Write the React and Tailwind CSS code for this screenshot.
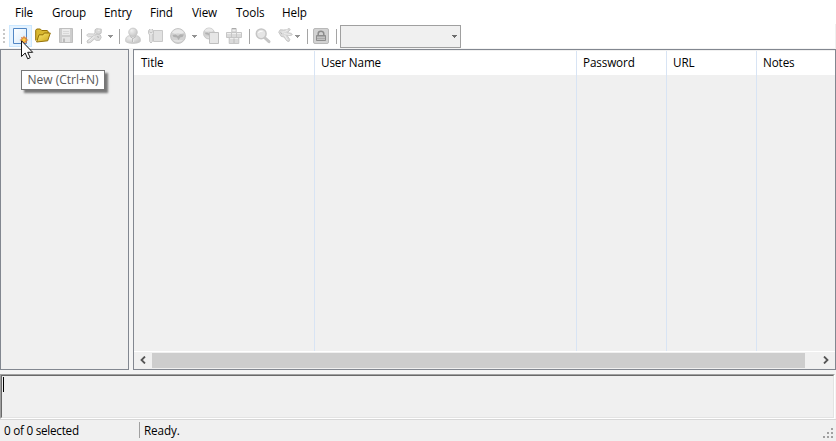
import React from "react";

const menus = [
  ["File", "w-[37px]"],
  ["Group", "w-[52px]"],
  ["Entry", "w-[46px]"],
  ["Find", "w-[42px]"],
  ["View", "w-[44px]"],
  ["Tools", "w-[46px]"],
  ["Help", "w-[44px]"],
];

const Icon = ({ children }) => (
  <svg width="18" height="18" viewBox="-1 -1 18 18" className="block shrink-0">{children}</svg>
);
const Item = ({ children }) => (
  <div className="flex h-[22px] w-[23px] shrink-0 items-center pl-[2px]">{children}</div>
);
const Split = ({ children, wide = true }) => (
  <div className={wide ? "flex h-[22px] w-8 shrink-0 items-center pl-px" : "flex h-[22px] w-[29px] shrink-0 items-center pl-[2px]"}>
    {children}
    <svg width="5" height="3" viewBox="0 0 5 3" shapeRendering="crispEdges" className={wide ? "ml-[5px] shrink-0" : "ml-0 shrink-0"}>
      <path d="M0 0h5v1H4v1H3v1H2V2H1V1H0z" fill="#929292" />
    </svg>
  </div>
);
const Sep = () => (
  <div className="flex w-[6px] shrink-0 pl-[3px]"><div className="h-[15px] w-px bg-[#a5a5a5]" /></div>
);

const NewIcon = () => (
  <Icon>
    <defs><linearGradient id="page" x2="1" y2="1"><stop stopColor="#fff" /><stop offset="1" stopColor="#d7eafa" /></linearGradient></defs>
    <path d="M1.5.5h13v15h-13z" fill="url(#page)" stroke="#5287c5" />
    <path d="M12 7.5l1 2 2-.5-.5 2 2 1-2 1 .5 2-2-.5-1 2-1-2-2 .5.5-2-2-1 2-1-.5-2 2 .5z" fill="#dc8541" />
    <circle cx="12" cy="12" r="1.7" fill="#ffd33c" />
  </Icon>
);
const FolderIcon = () => (
  <Icon>
    <defs><linearGradient id="gold" y2="1"><stop stopColor="#fbea70" /><stop offset="1" stopColor="#cda51c" /></linearGradient></defs>
    <path d="M.7 12.5V2.2L1.7 1h3.6l1.4 1.5h5.6l1 1.5v3" fill="#d9b830" stroke="#957107" />
    <path d="M1.6 14L4 6.8h4L9.3 5h6l-2.6 7.8z" fill="url(#gold)" stroke="#957107" strokeLinejoin="round" />
  </Icon>
);
const SaveIcon = () => (
  <Icon>
    <path d="M1.5.5h13v14h-13z" fill="#cdcdcd" stroke="#bfbfbf" />
    <path d="M4 1h8v6H4z" fill="#ebebeb" /><path d="M5 3.5h6M5 5.5h6" stroke="#d8d8d8" />
    <path d="M4 9h8v5H4z" fill="#e4e4e4" /><path d="M5 10.5h2V14H5z" fill="#bbb" />
  </Icon>
);
const KeyIcon = () => (
  <Icon>
    <path d="M9 1.8L10.5.7l4.8.5-.2 4-2.6 1-3.5-1z" fill="#dadada" stroke="#c2c2c2" />
    <path d="M.6 7.2l1.6-1.4 5.8.2 1.6-1.5 2 1.5-2.2 2.7-7 .1z" fill="#e2e2e2" stroke="#cdcdcd" />
    <path d="M1 13l7.3-5.6 2.6-1.3 3.4.8.9 2.6-1.6 2.8-3.3.1-2-1.4-3.8 3.5-2.9.5z" fill="#dcdcdc" stroke="#c6c6c6" />
    <path d="M2.8 13l5.7-4.9" stroke="#f1f1f1" /><path d="M11.2 8.5l1.8 1" stroke="#b5b5b5" strokeWidth="1.3" />
    <path d="M11.8 2.2h2" stroke="#f2f2f2" />
  </Icon>
);
const UserIcon = () => (
  <Icon>
    <defs><radialGradient id="silver" cx=".35" cy=".3" r=".8"><stop stopColor="#f0f0f0" /><stop offset="1" stopColor="#c2c2c2" /></radialGradient></defs>
    <path d="M.7 13.5C.2 9.5 2 7.8 5 7.6h6c3 .2 4.8 1.9 4.3 5.9C13 16 3 16 .7 13.5z" fill="url(#silver)" stroke="#c6c6c6" strokeWidth=".8" />
    <ellipse cx="8" cy="4.3" rx="4.3" ry="4.2" fill="url(#silver)" stroke="#c4c4c4" strokeWidth=".8" />
    <path d="M5 8.4l3 2.2 3-2.2M7.5 10.5v3.5" fill="none" stroke="#bcbcbc" />
    <path d="M8.5 11v3" stroke="#e8e8e8" />
  </Icon>
);
const EntryIcon = () => (
  <Icon>
    <path d="M5.5 2.5h9v11h-9z" fill="#e1e1e1" stroke="#c8c8c8" />
    <path d="M2 1v3.5h2V1l1.5 1.5v3L4.3 7v6.5L3 15l-1.3-1.5V7L.6 5.5v-3z" fill="#e5e5e5" stroke="#c4c4c4" />
  </Icon>
);
const Globe = () => (
  <>
    <circle cx="8" cy="8" r="7.4" fill="#d2d2d2" stroke="#c3c3c3" />
    <path d="M2 4.8C4-.1 12-.1 14 4.8l-3 1-3-.6-3 .6z" fill="#e9e9e9" />
    <path d="M2.5 7l3-.5L8 8l2.2-1.8L14 6.5 12.5 9l-2 .3L8.5 12 7 9.5 3.5 9z" fill="#b0b0b0" />
    <path d="M3 12c2 2.5 8 2.5 10 0l-4 .3z" fill="#e4e4e4" />
  </>
);
const CopyIcon = () => (
  <Icon>
    <g transform="translate(0 -.5) scale(.75)"><Globe /></g>
    <path d="M6.5 4.5h9v11h-9z" fill="#e6e6e6" stroke="#bfbfbf" />
  </Icon>
);
const CubesIcon = () => (
  <Icon>
    <g fill="#dadada" stroke="#c6c6c6">
      <path d="M5.8.5h4.4v4H5.8zM.5 4.5h5v5h-5zM5.5 4.5h5v5h-5zM10.5 4.5h5v5h-5zM3.2 9.5H8v6H3.2zM8 9.5h4.8v6H8z" />
    </g>
    <path d="M6.5 2.5h3M1 5.5h4M6 5.5h4M11 5.5h4M4 10.5h3.5M8.5 10.5H12" stroke="#efefef" />
    <path d="M6 .5h4" stroke="#aaa" />
  </Icon>
);
const FindIcon = () => (
  <Icon>
    <path d="M10 10l4 3.7" stroke="#c6c6c6" strokeWidth="3" strokeLinecap="round" />
    <circle cx="6.2" cy="5.8" r="4.9" fill="#e5e5e5" stroke="#c6c6c6" strokeWidth="1.5" />
    <path d="M3.5 5c.5-1.5 2-2 4-1.6" fill="none" stroke="#fff" />
  </Icon>
);
const KeysIcon = () => (
  <Icon>
    <path d="M.7 4.2l1.5-2.4L5.5 2l3.2-.2L11 .4l1.3 1.2-3 3 4 .8 1 1.2-1.5.9-4-.5 3 4.6-.8 1.9-2-.5L6 9 3.2 8.4z" fill="#dadada" stroke="#c8c8c8" />
    <path d="M2.5 4.5l4-.7 3.5-2M6 5.5l6.5 1.2M6.5 7l3 5" fill="none" stroke="#ededed" />
    <path d="M2.5 4l1.3 2" stroke="#b8b8b8" />
  </Icon>
);
const LockIcon = () => (
  <Icon>
    <rect x=".5" y=".5" width="15" height="15" rx="1.5" fill="#d2d2d2" stroke="#b9b9b9" />
    <path d="M5.2 7.5V5.7c0-3.4 5.6-3.4 5.6 0v1.8" fill="none" stroke="#8c8c8c" strokeWidth="1.5" />
    <path d="M3.5 7.5h9v5h-9z" fill="#aaa" stroke="#8d8d8d" /><path d="M4 9.5h8M4 11.5h8" stroke="#c2c2c2" />
  </Icon>
);

const columns = [["Title", "w-[181px]"], ["User Name", "w-[262px]"], ["Password", "w-[90px]"], ["URL", "w-[90px]"], ["Notes", "flex-1"]];

export default function App() {
  return (
    <div className="relative flex h-[441px] w-[836px] flex-col overflow-hidden bg-[#f4f4f4] font-['Open_Sans','Noto_Sans',sans-serif] text-[11.7px] leading-4 tracking-[-0.12px] text-black">
      <div className="flex h-6 shrink-0 bg-white pl-[15px] pt-1">
        {menus.map(([m, w]) => <div key={m} className={w}>{m}</div>)}
      </div>

      <div className="flex h-6 shrink-0 items-center bg-white">
        <div className="flex w-[9px] shrink-0 flex-col gap-[2px] pl-[3px]">
          {[0, 1, 2, 3].map((n) => <i key={n} className="size-[2px] bg-[#c8c8c8]" />)}
        </div>
        <div className="flex h-[22px] w-[23px] shrink-0 items-center border border-[#cce8ff] bg-[#e5f3ff] pl-px"><NewIcon /></div>
        <Item><FolderIcon /></Item>
        <Item><SaveIcon /></Item>
        <Sep />
        <Split><KeyIcon /></Split>
        <Sep />
        <Item><UserIcon /></Item>
        <Item><EntryIcon /></Item>
        <Split><Icon><Globe /></Icon></Split>
        <Item><CopyIcon /></Item>
        <Item><CubesIcon /></Item>
        <Sep />
        <Item><FindIcon /></Item>
        <Split wide={false}><KeysIcon /></Split>
        <Sep />
        <Item><LockIcon /></Item>
        <Sep />
        <div className="ml-px mt-px flex h-[23px] w-[121px] shrink-0 items-center justify-end border border-[#a0a0a0] bg-[#f0f0f0] pr-[3px]">
          <svg width="5" height="3" viewBox="0 0 5 3" shapeRendering="crispEdges"><path d="M0 0h5v1H4v1H3v1H2V2H1V1H0z" fill="#6d6d6d" /></svg>
        </div>
        <div className="ml-auto h-6 w-px bg-[#f0f0f0]" />
      </div>

      <div className="flex h-[322px] shrink-0 gap-1 pt-px">
        <div className="w-[129px] shrink-0 border border-[#828790] bg-[#f0f0f0]" />
        <div className="flex w-[703px] shrink-0 flex-col border border-[#828790] bg-[#f0f0f0]">
          <div className="flex h-[301px] shrink-0 pt-px">
            {columns.map(([name, w], i) => (
              <div key={name} className={`${w} flex flex-col border-[#d8e4f4] ${i < 4 ? "border-r" : ""}`}>
                <div className={`h-[24px] bg-white pt-[3px] ${i ? "pl-[6px]" : "pl-[7px]"}`}>{name}</div>
              </div>
            ))}
          </div>
          <div className="flex h-[17px] shrink-0 items-center border-t border-white">
            <div className="flex w-[18px] justify-center"><svg width="6" height="8" viewBox="0 0 6 8"><path d="M5 .5L1.5 4 5 7.5" fill="none" stroke="#555" strokeWidth="1.8" /></svg></div>
            <div className="h-[15px] w-[653px] bg-[#cdcdcd]" />
            <div className="flex flex-1 justify-end pr-[6px]"><svg width="6" height="8" viewBox="0 0 6 8"><path d="M1 .5L4.5 4 1 7.5" fill="none" stroke="#555" strokeWidth="1.8" /></svg></div>
          </div>
        </div>
      </div>

      <div className="mt-1 mr-px h-[45px] shrink-0 border border-b-white border-l-[#a0a0a0] border-r-white border-t-[#a0a0a0]">
        <div className="h-full border border-b-[#e3e3e3] border-l-[#696969] border-r-[#e3e3e3] border-t-[#696969] bg-[#f0f0f0] pl-px pt-px">
          <div className="h-[15px] w-px bg-black" />
        </div>
      </div>

      <div className="flex flex-1 border-t border-[#d7d7d7] bg-[#f0f0f0]">
        <div className="w-[139px] pl-1 pt-[2px] tracking-[-0.25px]">0 of 0 selected</div>
        <div className="mt-[2px] h-4 w-px bg-[#a0a0a0]" />
        <div className="flex-1 pl-1 pt-[2px]">Ready.</div>
        <svg width="14" height="21" viewBox="0 0 14 21" className="shrink-0">
          <path d="M9 8h2v2H9zM5 12h2v2H5zM9 12h2v2H9zM1 16h2v2H1zM5 16h2v2H5zM9 16h2v2H9z" fill="#a0a0a0" />
        </svg>
      </div>

      <div className="absolute left-[21px] top-[70px] flex h-5 w-[84px] justify-center whitespace-nowrap border border-[#767676] bg-white pt-px text-[12px] leading-4 tracking-normal text-[#575757] shadow-[3px_3px_2px_rgba(0,0,0,0.5)]">New (Ctrl+N)</div>
      <svg className="absolute left-[21px] top-[40px]" width="13" height="21" viewBox="0 0 13 21">
        <path d="M.5.8v15.7l3.7-3.5 2.5 5.8 2.5-1.1-2.5-5.4h5z" fill="white" stroke="#111" />
      </svg>
    </div>
  );
}
